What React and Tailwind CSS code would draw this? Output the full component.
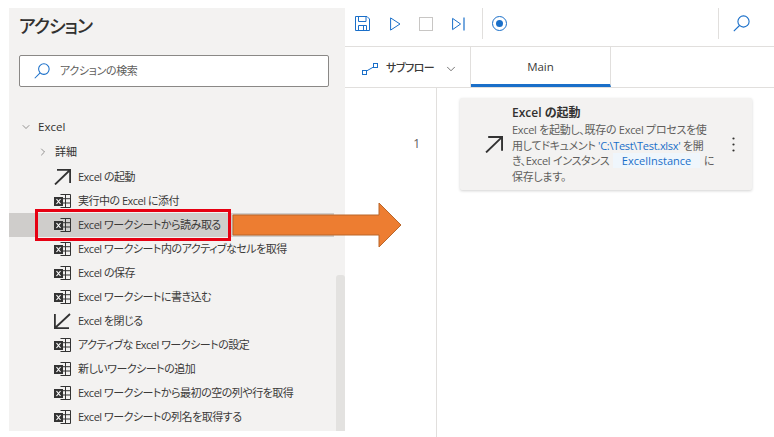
import { ChevronDown, ChevronRight } from 'lucide-react';

const ACTIONS = [
  { label: 'Excel の起動', icon: 'open' },
  { label: '実行中の Excel に添付', icon: 'sheet' },
  { label: 'Excel ワークシートから読み取る', icon: 'sheet', selected: true },
  { label: 'Excel ワークシート内のアクティブなセルを取得', icon: 'sheet' },
  { label: 'Excel の保存', icon: 'sheet' },
  { label: 'Excel ワークシートに書き込む', icon: 'sheet' },
  { label: 'Excel を閉じる', icon: 'close' },
  { label: 'アクティブな Excel ワークシートの設定', icon: 'sheet' },
  { label: '新しいワークシートの追加', icon: 'sheet' },
  { label: 'Excel ワークシートから最初の空の列や行を取得', icon: 'sheet' },
  { label: 'Excel ワークシートの列名を取得する', icon: 'sheet' },
];

function SheetIcon() {
  return (
    <svg width="17" height="14" viewBox="0 0 17 14" fill="none">
      <path d="M6.5 .5H16.5V13.5H6.5M6.5 4.7H16.5M6.5 9H16.5M11.5 .5V13.5" stroke="#333" />
      <rect x="0" y="3" width="9" height="9" fill="#333" />
      <path d="M2.5 5L6.5 10M6.5 5L2.5 10" stroke="#fff" strokeWidth="1.2" />
    </svg>
  );
}

function OpenIcon({ size = 17 }) {
  return (
    <svg width={size} height={size - 1} viewBox="0 0 17 16" fill="none" stroke="#333" strokeWidth="1.8">
      <path d="M3 .9H16.1V14M16 1L1 15.5" />
    </svg>
  );
}

function CloseIcon() {
  return (
    <svg width="17" height="16" viewBox="0 0 17 16" fill="none" stroke="#333" strokeWidth="1.8">
      <path d="M.9 1V15.1H15M1 15L16 1" />
    </svg>
  );
}

function SearchGlyph({ size = 17 }) {
  return (
    <svg width={size} height={size} viewBox="0 0 17 17" fill="none" stroke="#1a6fc9" strokeWidth="1.1">
      <circle cx="10.5" cy="6.5" r="5.6" />
      <path d="M6.5 10.5L.8 16.2" />
    </svg>
  );
}

function ActionIcon({ type }) {
  if (type === 'open') return <OpenIcon />;
  if (type === 'close') return <CloseIcon />;
  return <SheetIcon />;
}

function ActionRow({ label, icon, selected }) {
  return (
    <div className={`flex h-6 items-center pl-[45px] ${selected ? 'bg-[#cfcdcb]' : ''}`}>
      <span className="flex w-[24px] justify-start">
        <ActionIcon type={icon} />
      </span>
      <span className="whitespace-nowrap pt-[1px] text-[11px] tracking-[-0.5px] text-[#3b3a39]">{label}</span>
    </div>
  );
}

function Sidebar() {
  return (
    <aside className="relative flex w-[336px] shrink-0 flex-col overflow-hidden bg-[#f3f2f1]">
      <h1 className="ml-[10px] mt-[5px] h-[26px] text-[18px] font-medium leading-[26px] tracking-[-1px] text-[#323130]">アクション</h1>
      <div className="ml-[10px] mt-[16px] flex h-[32px] w-[310px] items-center rounded-[2px] border border-[#8a8886] bg-white pl-[14px]">
        <SearchGlyph size={16} />
        <span className="ml-[10px] pt-[1px] text-[11px] tracking-[-0.35px] text-[#605e5c]">アクションの検索</span>
      </div>
      <div className="mt-[28px] flex h-6 items-center pl-[11px] text-[#323130]">
        <ChevronDown size={12} strokeWidth={1} />
        <span className="ml-[6px] text-[11.5px]">Excel</span>
      </div>
      <div className="flex h-[26px] items-center pl-[28px] text-[#323130]">
        <ChevronRight size={12} strokeWidth={1} />
        <span className="ml-[6px] pt-[1px] text-[11px]">詳細</span>
      </div>
      <div className="w-[325px]">
        {ACTIONS.map((a) => <ActionRow key={a.label} {...a} />)}
      </div>
      <div className="absolute bottom-0 right-0 top-[267px] w-[9px] rounded-t-[3px] bg-[#e3e2e0]" />
    </aside>
  );
}

function Toolbar() {
  return (
    <div className="h-[38px]">
      <div className="flex h-[31px] items-center">
        <svg className="ml-[10px]" width="15" height="15" viewBox="0 0 15 15" fill="none" stroke="#1a6fc9">
          <path d="M.5 .5H12L14.5 3V14.5H.5Z" />
          <path d="M3.5 .5V5.5H11V.5M3.5 14.5V9.5H11.5V14.5M8.5 9.5V14.5" />
        </svg>
        <svg className="ml-[20px]" width="11" height="14" viewBox="0 0 11 14" fill="none" stroke="#1a6fc9">
          <path d="M.6 .9L10 7L.6 13.1Z" />
        </svg>
        <span className="ml-[18px] h-[14px] w-[14px] border border-[#c8c6c4]" />
        <svg className="ml-[19px]" width="13" height="14" viewBox="0 0 13 14" fill="none" stroke="#1a6fc9">
          <path d="M.6 1.4L8.6 7L.6 12.6Z" />
          <path d="M12 .5V13.5" strokeWidth="1.2" />
        </svg>
        <div className="ml-[17px] h-[31px] w-px bg-[#e1dfdd]" />
        <span className="ml-[9px] flex h-[15px] w-[15px] items-center justify-center rounded-full border-[1.2px] border-[#1a6fc9]">
          <span className="h-[7px] w-[7px] rounded-full bg-[#1a6fc9]" />
        </span>
        <div className="ml-auto h-[31px] w-px bg-[#e1dfdd]" />
        <span className="ml-[14px] mr-[24px]"><SearchGlyph size={17} /></span>
      </div>
    </div>
  );
}

function Tabs() {
  return (
    <div className="flex h-[42px] border-y border-[#e1dfdd]">
      <div className="flex w-[126px] items-center border-r border-[#e1dfdd] pl-[17px] pt-[3px]">
        <svg width="16" height="12" viewBox="0 0 16 12" fill="none" stroke="#1a6fc9">
          <rect x=".5" y="7.5" width="4" height="4" />
          <rect x="11.5" y=".5" width="4" height="4" />
          <path d="M4.5 8L11.5 4" />
        </svg>
        <span className="ml-[8px] w-[46px] whitespace-nowrap text-[11px] font-medium tracking-[-0.5px] text-[#3b3a39]">サブフロー</span>
        <ChevronDown size={14} strokeWidth={1.2} className="ml-[12px] text-[#3b3a39]" />
      </div>
      <div className="flex w-[140px] items-center justify-center border-b-[3px] border-r border-r-[#e1dfdd] border-b-[#1a6fc9] pt-[3px] text-[11.5px] font-medium text-[#3b3a39]">Main</div>
    </div>
  );
}

function StepCard() {
  return (
    <div className="ml-[23px] mt-[10px] flex h-[92px] w-[292px] items-center rounded-[2px] bg-[#f3f2f1] shadow-[0_1px_3px_rgba(0,0,0,0.18)]">
      <span className="ml-[25px] w-[27px] shrink-0"><OpenIcon size={18} /></span>
      <div className="w-[208px] shrink-0 whitespace-nowrap">
        <div className="text-[12px] font-semibold leading-[18px] text-[#323130]">Excel の起動</div>
        <p className="text-[11px] leading-[15.5px] tracking-[-0.3px] text-[#605e5c]">
          Excel を起動し、既存の Excel プロセスを使<br />
          用してドキュメント <span className="text-[#1a6fc9]">'C:\Test\Test.xlsx'</span> を開<br />
          き、Excel インスタンス <span className="mx-[1px] bg-[#eff6fc] px-[9px] tracking-normal text-[#1a6fc9]">ExcelInstance</span> に<br />
          保存します。
        </p>
      </div>
      <svg className="ml-[12px]" width="3" height="15" viewBox="0 0 3 15" fill="#323130">
        <circle cx="1.5" cy="1.5" r="1.1" />
        <circle cx="1.5" cy="7.5" r="1.1" />
        <circle cx="1.5" cy="13.5" r="1.1" />
      </svg>
    </div>
  );
}

function Editor() {
  return (
    <main className="flex min-w-0 flex-1 flex-col">
      <Toolbar />
      <Tabs />
      <div className="flex flex-1">
        <div className="w-[92px] border-r border-[#e1dfdd] pr-[16px] pt-[47px] text-right text-[12px] text-[#605e5c]">1</div>
        <StepCard />
      </div>
    </main>
  );
}

export default function App() {
  return (
    <div className="relative flex h-[437px] w-[774px] overflow-hidden bg-white pt-2 pl-[9px] font-['Open_Sans','Noto_Sans_CJK_JP',sans-serif] [font-feature-settings:'palt']">
      <div className="flex h-[423px] shrink-0"><Sidebar /></div>
      <Editor />
      <div className="absolute left-[35px] top-[209px] h-[32px] w-[196px] border-[3px] border-[#e60012]" />
      <svg className="absolute left-[232px] top-[202px]" width="171" height="46" viewBox="0 0 171 46">
        <path d="M1 13H147V1L169 23L147 45V33H1Z" fill="#ed7d31" stroke="#b9672b" />
      </svg>
    </div>
  );
}
